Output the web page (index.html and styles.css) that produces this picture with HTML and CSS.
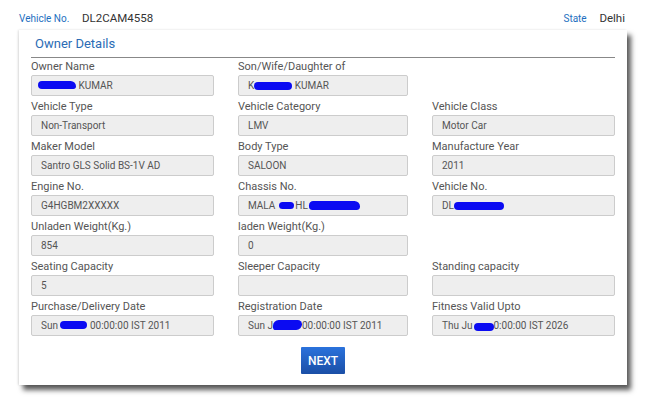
FILE: index.html
```html
<!DOCTYPE html>
<html lang="en-US">

<head>
    <meta charset="utf-8">
    <title>Vehicle Details</title>
    <link rel="stylesheet" href="styles.css">
</head>

<body>
    <div class="topbar">
        <div class="pair">
            <span class="key">Vehicle No.</span>
            <span class="val">DL2CAM4558</span>
        </div>
        <div class="pair">
            <span class="key">State</span>
            <span class="val">Delhi</span>
        </div>
    </div>

    <section class="card">
        <h2 class="title">Owner Details</h2>
        <div class="fields">
            <div class="field">
                <label>Owner Name</label>
                <div class="box first"><span class="hide w-owner"><i class="ink owner"></i></span> KUMAR</div>
            </div>
            <div class="field">
                <label>Son/Wife/Daughter of</label>
                <div class="box">K<span class="hide w-father"><i class="ink father"></i></span> KUMAR</div>
            </div>
            <div class="field"></div>

            <div class="field">
                <label>Vehicle Type</label>
                <div class="box">Non-Transport</div>
            </div>
            <div class="field">
                <label>Vehicle Category</label>
                <div class="box">LMV</div>
            </div>
            <div class="field">
                <label>Vehicle Class</label>
                <div class="box">Motor Car</div>
            </div>

            <div class="field">
                <label>Maker Model</label>
                <div class="box">Santro GLS Solid BS-1V AD</div>
            </div>
            <div class="field">
                <label>Body Type</label>
                <div class="box">SALOON</div>
            </div>
            <div class="field">
                <label>Manufacture Year</label>
                <div class="box">2011</div>
            </div>

            <div class="field">
                <label>Engine No.</label>
                <div class="box">G4HGBM2XXXXX</div>
            </div>
            <div class="field">
                <label>Chassis No.</label>
                <div class="box">MALA<span class="hide w-ch1"><i class="ink chassis1"></i></span>HL<span class="hide w-ch2"><i class="ink chassis2"></i></span></div>
            </div>
            <div class="field">
                <label>Vehicle No.</label>
                <div class="box">DL<span class="hide w-veh"><i class="ink vehno"></i></span></div>
            </div>

            <div class="field">
                <label>Unladen Weight(Kg.)</label>
                <div class="box">854</div>
            </div>
            <div class="field">
                <label>laden Weight(Kg.)</label>
                <div class="box">0</div>
            </div>
            <div class="field"></div>

            <div class="field">
                <label>Seating Capacity</label>
                <div class="box">5</div>
            </div>
            <div class="field">
                <label>Sleeper Capacity</label>
                <div class="box"></div>
            </div>
            <div class="field">
                <label>Standing capacity</label>
                <div class="box"></div>
            </div>

            <div class="field">
                <label>Purchase/Delivery Date</label>
                <div class="box">Sun <span class="hide w-pur"><i class="ink purchase"></i></span> 00:00:00 IST 2011</div>
            </div>
            <div class="field">
                <label>Registration Date</label>
                <div class="box">Sun J<span class="hide w-reg"><i class="ink regn"></i></span>00:00:00 IST 2011</div>
            </div>
            <div class="field">
                <label>Fitness Valid Upto</label>
                <div class="box">Thu Ju<span class="hide w-fit"><i class="ink fitness"></i></span>0:00:00 IST 2026</div>
            </div>
        </div>
        <div class="actions">
            <button type="button" class="next">NEXT</button>
        </div>
    </section>
</body>

</html>
```

FILE: styles.css
```css
html {
    background: #fff;
}

body {
    margin: 0;
    padding-bottom: 20px;
    color: #555;
    font-family: Roboto, "Noto Sans", sans-serif;
    font-size: 11px;
}

.topbar {
    display: flex;
    justify-content: space-between;
    align-items: baseline;
    padding: 11px 46px 0 19px;
    height: 19px;
}

.pair .key {
    color: #1e6fc0;
    font-size: 10px;
    margin-right: 10px;
}

.pair .val {
    color: #333;
    font-size: 11.5px;
}

.card {
    position: relative;
    width: 584px;
    margin: 0 0 0 19px;
    padding: 5px 12px 11px 12px;
    background: #fff;
    box-shadow: 4px 5px 5px rgba(0, 0, 0, 0.65), -1px 0 2px rgba(0, 0, 0, 0.12);
}

.title {
    margin: 0;
    padding: 1px 0 5px 4px;
    font-size: 13px;
    font-weight: 400;
    line-height: 16px;
    color: #2b6cb5;
    border-bottom: 1px solid #888;
}

.fields {
    display: grid;
    grid-template-columns: 183px 170px 183px;
    column-gap: 24px;
    row-gap: 4px;
    margin-top: 2px;
}

.field label {
    display: block;
    line-height: 14px;
    height: 14px;
    color: #555;
}

.box {
    box-sizing: border-box;
    height: 21px;
    margin-top: 1px;
    padding: 0 9px;
    font-size: 10px;
    line-height: 19px;
    color: #555;
    background: #eee;
    border: 1px solid #ccc;
    border-radius: 2px;
    white-space: nowrap;
}

.box.first {
    padding-left: 6px;
}

/* redaction marks from the original screenshot */
.hide {
    position: relative;
    display: inline-block;
    vertical-align: top;
    height: 19px;
}

.w-owner { width: 38px; }
.w-father { width: 38px; }
.w-ch1 { width: 20px; }
.w-ch2 { width: 52px; }
.w-veh { width: 50px; }
.w-pur { width: 27px; }
.w-reg { width: 29px; }
.w-fit { width: 21px; }

.ink {
    position: absolute;
    background: #0b0bf2;
    border-radius: 5px;
}

.owner { left: 0; right: 0; top: 5px; height: 8px; border-radius: 6px 8px 4px 6px; }
.father { left: 0; right: 0; top: 6px; height: 8px; }
.chassis1 { left: 4px; right: 1px; top: 6px; height: 7px; }
.chassis2 { left: 1px; right: 0; top: 5px; height: 9px; border-radius: 6px 8px 5px 5px; }
.vehno { left: 0; right: 0; top: 6px; height: 8px; }
.purchase { left: 0; right: 0; top: 5px; height: 8px; }
.regn { left: 0; right: 0; top: 4px; height: 10px; border-radius: 8px 6px 8px 4px; }
.fitness { left: 1px; right: 0; top: 7px; height: 8px; }

.actions {
    display: flex;
    justify-content: center;
    margin-top: 11px;
}

.next {
    width: 44px;
    height: 27px;
    padding: 0;
    border: none;
    border-radius: 1px;
    background: linear-gradient(#2a72dc, #1b4fa6);
    color: #fff;
    font-family: Roboto, "Noto Sans", sans-serif;
    font-size: 12px;
    font-weight: 500;
    cursor: pointer;
}
```
